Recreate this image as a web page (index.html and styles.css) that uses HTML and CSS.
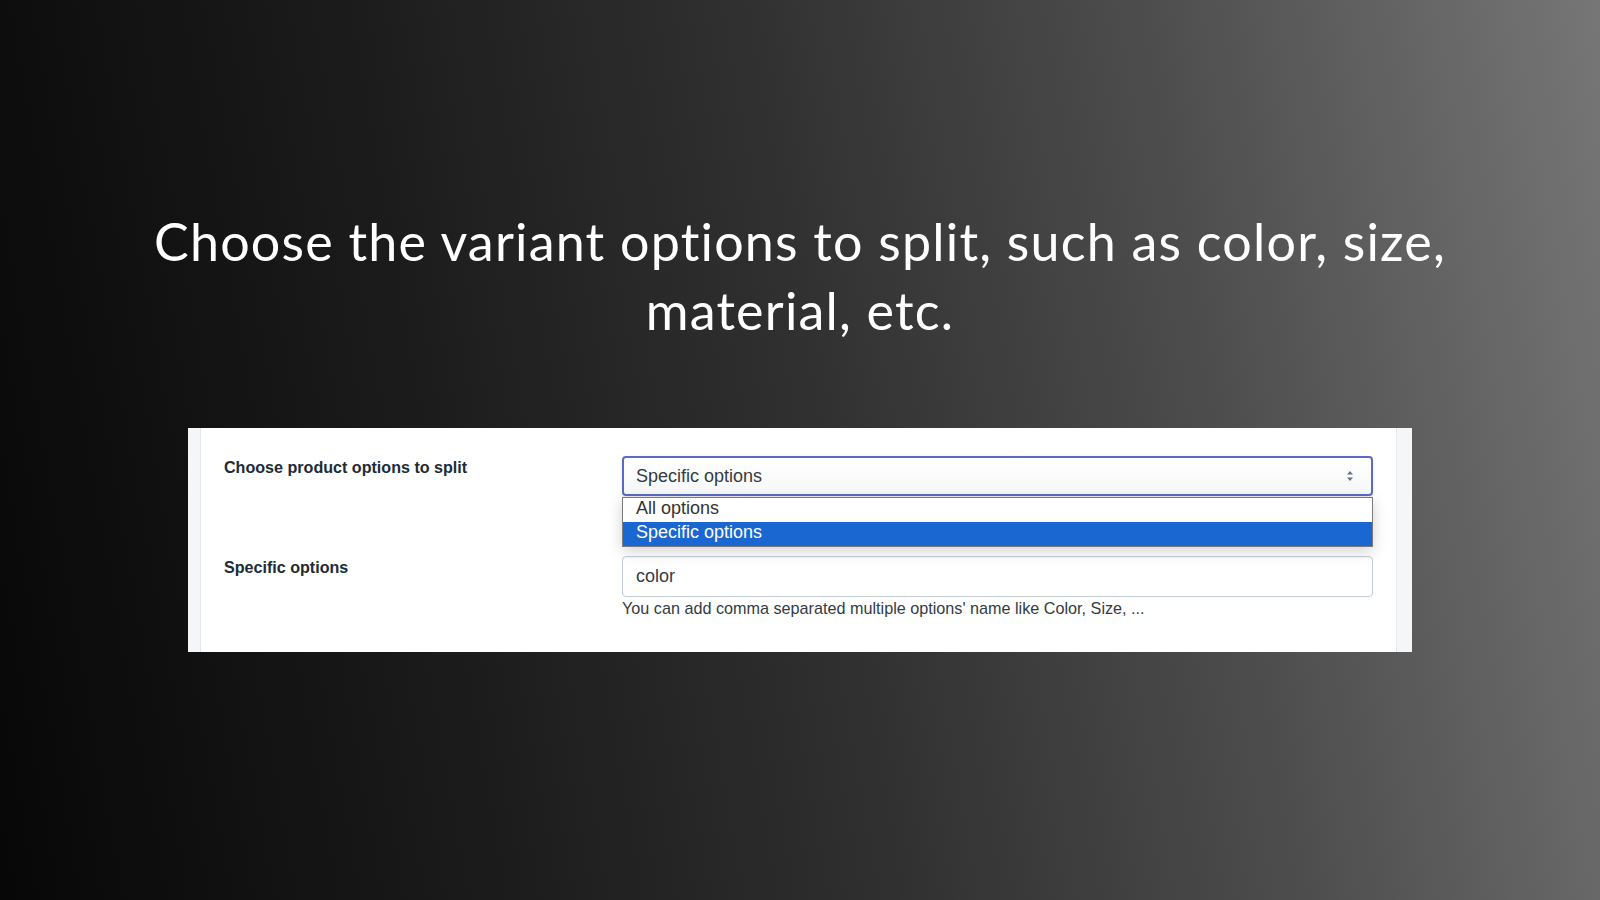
FILE: index.html
```html
<!DOCTYPE html>
<html lang="en">
<head>
    <meta charset="UTF-8">
    <title>Split variant options</title>
    <link rel="stylesheet" href="styles.css">
</head>
<body>
    <h1 class="headline">Choose the variant options to split, such as color, size, material, etc.</h1>

    <div class="shot">
        <div class="card">
            <div class="form-row">
                <label class="field-label">Choose product options to split</label>
                <div class="field">
                    <div class="select">
                        <span class="select-value">Specific options</span>
                        <svg class="caret" width="8" height="12" viewBox="0 0 8 12">
                            <path d="M4 1 L7 4.5 H1 Z" fill="#637381"/>
                            <path d="M4 11 L1 7.5 H7 Z" fill="#637381"/>
                        </svg>
                    </div>
                    <ul class="select-menu">
                        <li>All options</li>
                        <li class="selected">Specific options</li>
                    </ul>
                </div>
            </div>

            <div class="form-row">
                <label class="field-label">Specific options</label>
                <div class="field">
                    <div class="text-input">color</div>
                    <p class="help-text">You can add comma separated multiple options' name like Color, Size, ...</p>
                </div>
            </div>
        </div>
    </div>
</body>
</html>
```

FILE: styles.css
```css
* {
    margin: 0;
    padding: 0;
    box-sizing: border-box;
}

body {
    width: 1600px;
    height: 900px;
    overflow: hidden;
    background: linear-gradient(80deg, #070707 0%, #1b1b1b 28%, #2f2f2f 50%, #4d4d4d 74%, #767676 100%);
    font-family: "Liberation Sans", Arial, sans-serif;
    display: flex;
    flex-direction: column;
    align-items: center;
}

.headline {
    margin-top: 207px;
    width: 1360px;
    font-family: Lato, "Open Sans", sans-serif;
    font-size: 52px;
    font-weight: 400;
    line-height: 69px;
    letter-spacing: 1.2px;
    color: #ffffff;
    text-align: center;
}

.shot {
    margin-top: 83px;
    width: 1224px;
    height: 224px;
    background: #f4f6f8;
    padding: 0 15px 0 12px;
}

.card {
    height: 100%;
    background: #ffffff;
    border-left: 1px solid #e3e6ea;
    border-right: 1px solid #e3e6ea;
    padding: 28px 23px 0 23px;
}

.form-row {
    display: grid;
    grid-template-columns: 398px 1fr;
}

.form-row + .form-row {
    margin-top: 60px;
}

.field-label {
    font-size: 16.1px;
    font-weight: 700;
    color: #212b36;
    padding-top: 1px;
    line-height: 20px;
}

.field {
    position: relative;
}

.select {
    height: 40px;
    display: flex;
    align-items: center;
    justify-content: space-between;
    padding: 0 17px 0 12px;
    border: 2px solid #5c6ac4;
    border-radius: 4px;
    background: linear-gradient(180deg, #ffffff, #f6f7f8);
    box-shadow: 0 1px 3px rgba(22, 29, 37, 0.12);
}

.select-value,
.text-input {
    font-size: 18px;
    color: #333b44;
}

.caret {
    display: block;
}

.select-menu {
    position: absolute;
    top: 41px;
    left: 0;
    right: 0;
    list-style: none;
    background: #ffffff;
    border: 1px solid #7a7a7a;
    box-shadow: 0 4px 14px rgba(0, 0, 0, 0.18);
    z-index: 2;
}

.select-menu li {
    height: 24px;
    line-height: 21px;
    padding-left: 13px;
    font-size: 18px;
    color: #333;
}

.select-menu li.selected {
    background: #1a67d2;
    color: #ffffff;
}

.text-input {
    height: 41px;
    display: flex;
    align-items: center;
    padding: 0 13px;
    border: 1px solid #c4cdd5;
    border-radius: 4px;
    box-shadow: inset 0 1px 0 rgba(99, 115, 129, 0.05);
}

.help-text {
    margin-top: 1px;
    font-size: 16.2px;
    line-height: 20px;
    color: #333b44;
}
```
